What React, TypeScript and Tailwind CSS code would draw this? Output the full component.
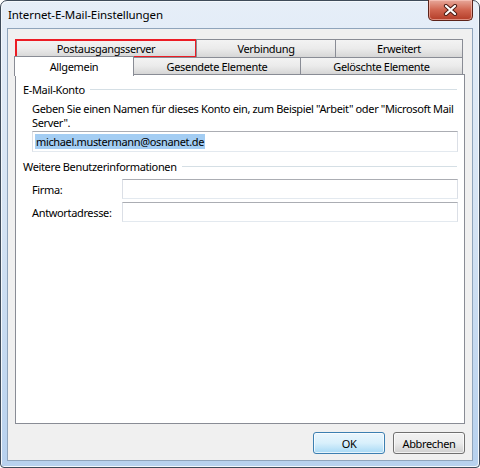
import React from "react";

const font = { fontFamily: '"Noto Sans", "Open Sans", sans-serif' };

function Tab({ label, className = "", selected = false, children }: { label: string; className?: string; selected?: boolean; children?: React.ReactNode }) {
  return (
    <div
      className={
        "relative flex items-center justify-center border border-[#898c95] text-[11px] tracking-[-0.35px] leading-[15px] text-black " +
        (selected
          ? "bg-white border-b-0 z-10 "
          : "bg-gradient-to-b from-[#f3f3f3] via-[#ebebeb] to-[#d6d6d6] ") +
        className
      }
    >
      <span>{label}</span>
      {children}
    </div>
  );
}

function Field({ className = "", children }: { className?: string; children?: React.ReactNode }) {
  return (
    <div
      className={
        "border border-[#abadb3] border-l-[#dbdfe6] border-r-[#dbdfe6] border-b-[#e3e9ef] bg-white flex items-center " +
        className
      }
    >
      {children}
    </div>
  );
}

function GroupLabel({ text }: { text: string }) {
  return (
    <div className="flex items-center h-[15px]">
      <span className="text-[11px] tracking-[-0.35px] leading-[15px] text-black whitespace-nowrap">{text}</span>
      <div className="flex-1 ml-[5px] mr-[1px] h-0 border-t border-[#d5dfe5]" />
    </div>
  );
}

export default function App() {
  return (
    <div className="w-[480px] h-[468px] bg-white" style={font}>
      <div className="w-[480px] h-[468px] flex flex-col border border-[#3f4b5a] rounded-t-[7px] rounded-b-[4px] bg-gradient-to-b from-[#e6eef8] via-[#d3e2f3] to-[#b7d1ee] px-[6px] pb-[6px] shadow-[inset_1px_1px_0_#f4f8fc,inset_-1px_-1px_0_#f4f8fc]">
        {/* Title bar */}
        <div className="h-[27px] flex justify-between">
          <div className="pt-[6px] pl-[1px] text-[11.5px] tracking-[-0.1px] leading-[16px] text-black whitespace-nowrap">
            Internet-E-Mail-Einstellungen
          </div>
          <div className="-mt-[1px] w-[45px] h-[21px] rounded-b-[5px] border border-[#5c2219] border-t-0 bg-gradient-to-b from-[#e7a89b] via-[#d0644f] to-[#b33c27] shadow-[inset_0_0_0_1px_rgba(255,210,200,0.55)] flex items-center justify-center">
            <svg width="15" height="12" viewBox="0 0 15 12">
              <path d="M3 2 L12 10 M12 2 L3 10" stroke="#4a1a12" strokeWidth="4.2" strokeLinecap="round" />
              <path d="M3 2 L12 10 M12 2 L3 10" stroke="#ffffff" strokeWidth="2.3" strokeLinecap="round" />
            </svg>
          </div>
        </div>

        {/* Client area */}
        <div className="flex-1 flex flex-col border border-[#8fa4bb] bg-[#f0f0f0] pl-[7px] pr-[7px] pt-[10px] pb-[6px]">
          {/* Tab rows */}
          <div className="flex flex-col mr-[2px]">
            <div className="flex h-[18px]">
              <Tab label="Postausgangsserver" className="w-[182px] border-b-0">
                <div className="absolute -left-[1px] -top-[1px] -right-[1px] -bottom-[1px] border-2 border-[#ec1c24]" />
              </Tab>
              <Tab label="Verbindung" className="w-[140px] -ml-[1px] border-b-0" />
              <Tab label="Erweitert" className="flex-1 -ml-[1px] border-b-0" />
            </div>
            <div className="flex h-[18px]">
              <Tab label="Allgemein" selected className="w-[120px] -ml-[1px] -mt-[1px] h-[20px]" />
              <Tab label="Gesendete Elemente" className="w-[168px] -ml-[1px]" />
              <Tab label="Gelöschte Elemente" className="flex-1 -ml-[1px]" />
            </div>
          </div>

          {/* Panel */}
          <div className="flex-1 -mt-[1px] border border-[#898c95] bg-white pl-[7px] pr-[6px] pt-[7px]">
            <GroupLabel text="E-Mail-Konto" />
            <div className="pl-[9px]">
              <div className="mt-[5px] text-[11px] tracking-[-0.35px] leading-[14px] text-black whitespace-nowrap">
                Geben Sie einen Namen für dieses Konto ein, zum Beispiel "Arbeit" oder "Microsoft Mail
                <br />
                Server".
              </div>
              <Field className="mt-[1px] h-[21px] pl-[2px]">
                <span className="text-[11px] tracking-[-0.35px] leading-[15px] bg-[#a3cdf3] text-black px-[1px]">
                  michael.mustermann@osnanet.de
                </span>
              </Field>
            </div>
            <div className="mt-[7px]">
              <GroupLabel text="Weitere Benutzerinformationen" />
            </div>
            <div className="pl-[9px]">
              <div className="mt-[5px] flex items-center h-[20px]">
                <div className="w-[90px] text-[11px] tracking-[-0.35px] leading-[15px] text-black">Firma:</div>
                <Field className="flex-1 h-[20px]" />
              </div>
              <div className="mt-[3px] flex items-center h-[20px]">
                <div className="w-[90px] text-[11px] tracking-[-0.35px] leading-[15px] text-black">Antwortadresse:</div>
                <Field className="flex-1 h-[20px]" />
              </div>
            </div>
          </div>

          {/* Buttons */}
          <div className="mt-[8px] flex justify-end gap-[8px] h-[22px]">
            <button className="w-[72px] h-[22px] rounded-[3px] border border-[#3c7fb1] bg-gradient-to-b from-[#eaf6fd] via-[#d9f0fc] to-[#a7d9f5] shadow-[inset_0_0_0_1px_rgba(255,255,255,0.7)] text-[11px] tracking-[-0.35px] leading-[15px] text-black">
              OK
            </button>
            <button className="w-[72px] h-[22px] rounded-[3px] border border-[#707070] bg-gradient-to-b from-[#f2f2f2] via-[#ebebeb] to-[#cfcfcf] shadow-[inset_0_0_0_1px_rgba(255,255,255,0.7)] text-[11px] tracking-[-0.35px] leading-[15px] text-black">
              Abbrechen
            </button>
          </div>
        </div>
      </div>
    </div>
  );
}
